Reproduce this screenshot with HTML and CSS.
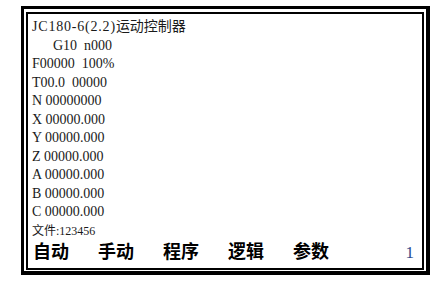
FILE: index.html
```html
<!DOCTYPE html>
<html lang="zh">
<head>
<meta charset="utf-8">
<title>JC180-6 运动控制器</title>
<link rel="stylesheet" href="styles.css">
</head>
<body>
<div class="frame">
  <div class="screen">
    <div class="lines">
      <div class="row"><span class="ver">JC180-6(2.2)</span>运动控制器</div>
      <div class="row">   G10 n000</div>
      <div class="row">F00000 100%</div>
      <div class="row">T00.0 00000</div>
      <div class="row axis">N 00000000</div>
      <div class="row axis">X 00000.000</div>
      <div class="row axis">Y 00000.000</div>
      <div class="row axis">Z 00000.000</div>
      <div class="row axis">A 00000.000</div>
      <div class="row axis">B 00000.000</div>
      <div class="row axis">C 00000.000</div>
      <div class="row small">文件:123456</div>
    </div>
    <div class="menu">
      <span class="item">自动</span>
      <span class="item">手动</span>
      <span class="item">程序</span>
      <span class="item">逻辑</span>
      <span class="item">参数</span>
      <span class="page">1</span>
    </div>
  </div>
</div>
</body>
</html>
```

FILE: styles.css
```css
html, body {
  margin: 0;
  padding: 0;
  background: #ffffff;
}

.frame {
  box-sizing: border-box;
  margin: 6px 0 0 21px;
  width: 409px;
  height: 269px;
  border-style: solid;
  border-color: #000;
  border-width: 3px 4px 4px 3px;
  padding: 3px 2px 1px 2px;
  display: flex;
}

.screen {
  flex: 1;
  border: 2px solid #000;
  padding: 4px 0 0 4px;
  display: flex;
  flex-direction: column;
}

.lines {
  font-family: "Liberation Serif", "Noto Sans CJK SC", serif;
  font-size: 14px;
  color: #1a1a1a;
  display: grid;
  grid-auto-rows: 18.5px;
}

.row {
  line-height: 18.5px;
  white-space: pre;
  word-spacing: 3.5px;
}

.row.axis {
  word-spacing: 0;
}

.ver {
  letter-spacing: 0.8px;
}

.row.small {
  font-size: 12px;
  word-spacing: 3px;
}

.menu {
  display: flex;
  align-items: baseline;
  gap: 29px;
  height: 21px;
  line-height: 21px;
  padding: 0 8px 0 1px;
  font-family: "Noto Sans CJK SC", sans-serif;
  font-weight: 700;
  font-size: 18px;
  color: #000;
}

.page {
  margin-left: auto;
  font-family: "Liberation Serif", serif;
  font-weight: 400;
  font-size: 17px;
  color: #2b4c8c;
}
```
